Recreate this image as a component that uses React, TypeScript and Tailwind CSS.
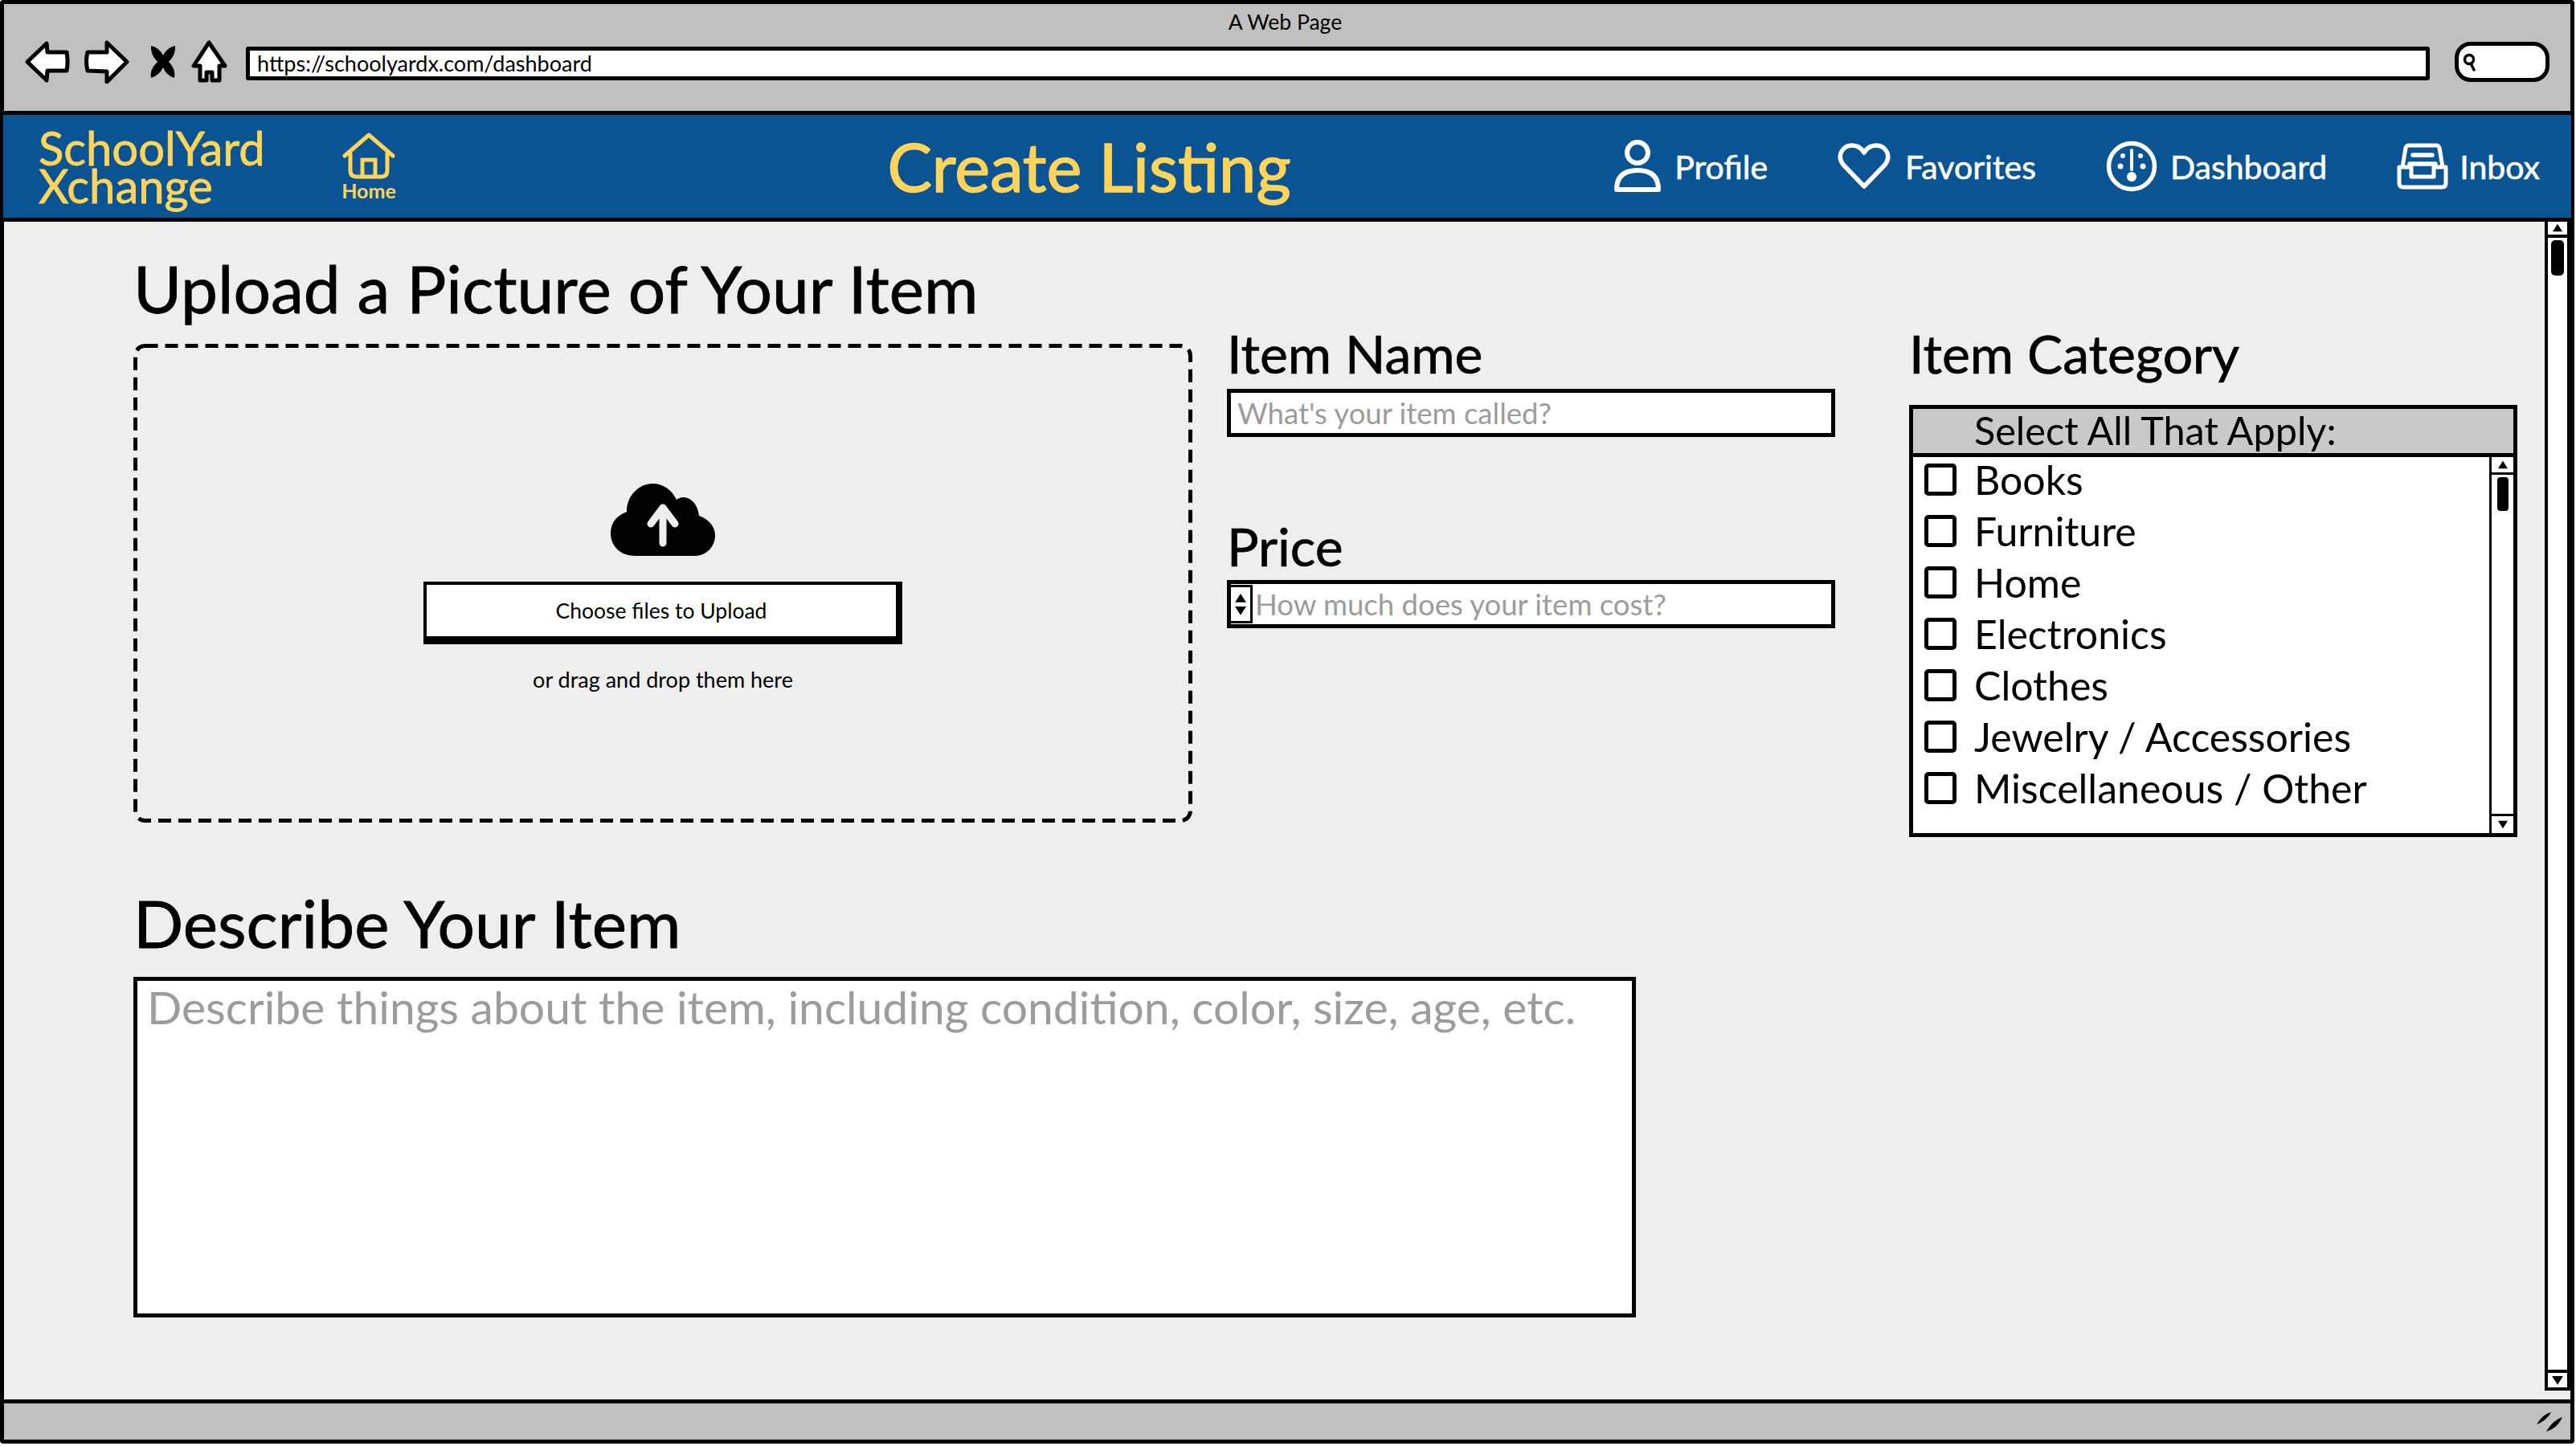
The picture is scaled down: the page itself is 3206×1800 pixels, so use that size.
const categories = [
  "Books",
  "Furniture",
  "Home",
  "Electronics",
  "Clothes",
  "Jewelry / Accessories",
  "Miscellaneous / Other",
];

const BackIcon = () => (
  <svg width="58" height="54" viewBox="0 0 58 54" className="shrink-0">
    <path d="M28 4 L4 27 L28 50 L29 38 L53 38 Q55 27 53 15 L29 15 Z" fill="#fff" stroke="#000" strokeWidth="5" strokeLinejoin="round" />
  </svg>
);

const ForwardIcon = () => (
  <svg width="58" height="54" viewBox="0 0 58 54" className="shrink-0">
    <path d="M29 3 L54 27 L29 52 L29 39 L5 38 Q2 26 5 15 L29 15 Z" fill="#fff" stroke="#000" strokeWidth="5" strokeLinejoin="round" />
  </svg>
);

const StopIcon = () => (
  <svg width="34" height="42" viewBox="0 0 34 42" className="shrink-0">
    <path d="M2 1 Q12 3 17 13 Q22 3 32 1 Q33 12 24 21 Q33 30 31 41 Q21 38 17 28 Q12 38 2 41 Q0 30 10 21 Q1 12 2 1 Z" fill="#000" />
  </svg>
);

const ToolbarHomeIcon = () => (
  <svg width="46" height="54" viewBox="0 0 46 54" className="shrink-0">
    <path d="M23 3 L4 32 L12 32 L12 50 L20 50 L20 40 L27 40 L27 50 L36 50 L36 32 L43 32 Z" fill="#fff" stroke="#000" strokeWidth="5" strokeLinejoin="round" />
  </svg>
);

const SearchPill = () => (
  <div className="w-[118px] h-[50px] rounded-[20px] bg-white border-[5px] border-black flex items-center pl-[5px] shrink-0">
    <svg width="18" height="24" viewBox="0 0 18 24">
      <circle cx="8" cy="9" r="5.5" fill="none" stroke="#000" strokeWidth="3.5" />
      <path d="M10 14 L14 22" stroke="#000" strokeWidth="3.5" strokeLinecap="round" />
    </svg>
  </div>
);

const HomeIcon = () => (
  <svg width="66" height="58" viewBox="0 0 66 58">
    <path d="M3 29 L33 3 L63 29" fill="none" stroke="#ffd45a" strokeWidth="5" strokeLinecap="round" strokeLinejoin="round" />
    <path d="M10 25 V47 Q10 55 18 55 H48 Q56 55 56 47 V25" fill="none" stroke="#ffd45a" strokeWidth="5" />
    <path d="M25 55 V34 H41 V55" fill="none" stroke="#ffd45a" strokeWidth="5" />
  </svg>
);

const ProfileIcon = () => (
  <svg width="58" height="66" viewBox="0 0 58 66" className="shrink-0">
    <circle cx="29" cy="16" r="13" fill="none" stroke="#fff" strokeWidth="6" />
    <path d="M3 62 Q3 38 29 38 Q55 38 55 62 Z" fill="none" stroke="#fff" strokeWidth="6" strokeLinejoin="round" />
  </svg>
);

const HeartIcon = () => (
  <svg width="66" height="58" viewBox="0 0 66 58" className="shrink-0">
    <path d="M33 54 L7 27 C-2 15 7 3 18 3 C25 3 30 7 33 12 C36 7 41 3 48 3 C59 3 68 15 59 27 Z" fill="none" stroke="#fff" strokeWidth="5.5" strokeLinejoin="round" />
  </svg>
);

const GaugeIcon = () => (
  <svg width="64" height="64" viewBox="0 0 64 64" className="shrink-0">
    <circle cx="32" cy="32" r="28.5" fill="none" stroke="#fff" strokeWidth="5.5" />
    <path d="M32 12 V36" stroke="#fff" strokeWidth="4" strokeLinecap="round" />
    <circle cx="32" cy="45" r="6" fill="#fff" />
    <circle cx="18" cy="32" r="3.5" fill="#fff" />
    <circle cx="46" cy="32" r="3.5" fill="#fff" />
    <circle cx="21" cy="19" r="3" fill="#fff" />
    <circle cx="43" cy="19" r="3" fill="#fff" />
  </svg>
);

const InboxIcon = () => (
  <svg width="64" height="58" viewBox="0 0 64 58" className="shrink-0">
    <path d="M7 30 L11 6 Q12 3 15 3 H49 Q52 3 53 6 L57 30" fill="none" stroke="#fff" strokeWidth="5" strokeLinejoin="round" />
    <path d="M3 30 H18 V42 H46 V30 H61 V50 Q61 55 56 55 H8 Q3 55 3 50 Z" fill="none" stroke="#fff" strokeWidth="5" strokeLinejoin="round" />
    <path d="M20 15 H44 M16 26 H48" stroke="#fff" strokeWidth="5.5" strokeLinecap="round" />
  </svg>
);

const CloudUploadIcon = () => (
  <svg width="130" height="90" viewBox="0 0 130 90">
    <path d="M30 90 C10 90 0 76 0 62 C0 48 8 40 20 35 C20 14 36 0 52 0 C66 0 76 8 82 20 C92 12 108 20 110 40 C122 44 130 54 130 64 C130 80 118 90 104 90 Z" fill="#000" />
    <path d="M65 74 V30 M50 50 L65 30 L80 50" fill="none" stroke="#eeeeee" strokeWidth="9" strokeLinecap="round" strokeLinejoin="round" />
  </svg>
);

const Triangle = ({ down = false, size = 16 }: { down?: boolean; size?: number }) => (
  <svg width={size} height={size * 0.8} viewBox="0 0 16 13">
    <path d={down ? "M1 1 H15 L8 12 Z" : "M8 1 L15 12 H1 Z"} fill="#000" />
  </svg>
);

const NavLink = ({ icon, label, gap }: { icon: React.ReactNode; label: string; gap: string }) => (
  <div className={`flex items-center ${gap} text-white text-[41px] leading-none [-webkit-text-stroke:0.6px]`}>
    {icon}
    <span>{label}</span>
  </div>
);

const Scrollbar = () => (
  <div className="w-[32px] h-full shrink-0 bg-white border-x-[4px] border-black flex flex-col">
    <div className="h-[20px] border-b-[4px] border-black flex items-center justify-center shrink-0">
      <Triangle size={14} />
    </div>
    <div className="flex-1 pt-[3px]">
      <div className="mx-auto w-[16px] h-[44px] bg-black rounded-[5px]" />
    </div>
    <div className="h-[26px] border-y-[4px] border-black flex items-center justify-center shrink-0">
      <Triangle down />
    </div>
  </div>
);

const ListScrollbar = () => (
  <div className="w-[30px] shrink-0 border-l-[3px] border-black flex flex-col">
    <div className="h-[22px] border-b-[3px] border-black flex items-center justify-center">
      <Triangle size={14} />
    </div>
    <div className="flex-1 pt-[3px]">
      <div className="mx-auto w-[14px] h-[42px] bg-black rounded-[4px]" />
    </div>
    <div className="h-[24px] border-t-[3px] border-black flex items-center justify-center">
      <Triangle down size={14} />
    </div>
  </div>
);

export default function App() {
  return (
    <div className="w-[3206px] h-[1800px] bg-white overflow-hidden font-['Lato','Open_Sans',sans-serif] text-black">
      <div className="w-[3204px] h-[1797px] border-[5px] border-black rounded-[4px] bg-[#eeeeee] flex flex-col">
        {/* browser chrome */}
        <div className="h-[133px] bg-[#c0c0c0] shrink-0 flex flex-col">
          <div className="h-[45px] flex items-center justify-center text-[26.5px] leading-none pr-[5px]">
            A Web Page
          </div>
          <div className="flex items-center pl-[25px] pr-[26px]">
            <BackIcon />
            <div className="ml-[16px]">
              <ForwardIcon />
            </div>
            <div className="ml-[24px]">
              <StopIcon />
            </div>
            <div className="ml-[17px]">
              <ToolbarHomeIcon />
            </div>
            <div className="ml-[23px] mt-[3px] flex-1 h-[42px] bg-white border-[5px] border-black rounded-[3px] flex items-center pl-[9px] text-[27px] leading-none">
              https://schoolyardx.com/dashboard
            </div>
            <div className="ml-[31px]">
              <SearchPill />
            </div>
          </div>
        </div>

        {/* site header */}
        <div className="h-[138px] -mx-[1px] bg-[#0a5494] border-y-[5px] border-black shrink-0 flex items-center pl-[44px] pr-[39px] text-[#ffd45a]">
          <div className="w-[376px] shrink-0 text-[58px] leading-[47px] [-webkit-text-stroke:0.8px]">
            <div>SchoolYard</div>
            <div>Xchange</div>
          </div>
          <div className="flex flex-col items-center gap-[2px] w-[70px] shrink-0">
            <HomeIcon />
            <span className="text-[25px] font-bold leading-none">Home</span>
          </div>
          <div className="flex-1 text-center text-[83px] leading-none pl-[208px] [-webkit-text-stroke:1.5px]">Create Listing</div>
          <div className="flex items-center gap-[87px]">
            <NavLink icon={<ProfileIcon />} label="Profile" gap="gap-[17px]" />
            <NavLink icon={<HeartIcon />} label="Favorites" gap="gap-[18px]" />
            <NavLink icon={<GaugeIcon />} label="Dashboard" gap="gap-[16px]" />
            <NavLink icon={<InboxIcon />} label="Inbox" gap="gap-[14px]" />
          </div>
        </div>

        {/* page body */}
        <div className="flex-1 min-h-0 flex">
          <div className="flex-1 pl-[161px] pt-[36px]">
            <div className="flex">
              <div className="w-[1318px] shrink-0">
                <h1 className="text-[82px] leading-[92px] font-normal [-webkit-text-stroke:0.8px]">Upload a Picture of Your Item</h1>
                <div className="relative mt-[24px] h-[596px] flex flex-col items-center pt-[174px]">
                  <svg className="absolute inset-0 w-full h-full" fill="none">
                    <rect x="2.5" y="2.5" width="1313" height="591" rx="12" stroke="#000" strokeWidth="5" strokeDasharray="16 9" />
                  </svg>
                  <CloudUploadIcon />
                  <div className="mt-[32px] w-[596px] h-[78px] bg-white border-[4px] border-black border-b-[10px] border-r-[8px] flex items-center justify-center text-[26.5px] leading-none">
                    Choose files to Upload
                  </div>
                  <p className="mt-[30px] text-[27px] leading-none">or drag and drop them here</p>
                </div>
              </div>

              <div className="ml-[43px] w-[757px] shrink-0 pt-[90px]">
                <h2 className="text-[66px] leading-[76px] font-normal [-webkit-text-stroke:0.7px]">Item Name</h2>
                <div className="mt-[6px] h-[60px] bg-white border-[5px] border-black flex items-center pl-[8px] text-[36.5px] leading-none text-[#9c9c9c]">
                  What's your item called?
                </div>
                <h2 className="mt-[98px] text-[66px] leading-[76px] font-normal [-webkit-text-stroke:0.7px]">Price</h2>
                <div className="mt-[4px] h-[60px] bg-white border-[5px] border-black flex items-center text-[36.5px] leading-none text-[#9c9c9c]">
                  <div className="w-[30px] h-[48px] border-[3px] border-black -ml-[3px] flex flex-col items-center justify-center gap-[3px] mr-[3px]">
                    <Triangle size={16} />
                    <Triangle down size={16} />
                  </div>
                  How much does your item cost?
                </div>
              </div>

              <div className="ml-[92px] w-[757px] shrink-0 pt-[90px]">
                <h2 className="text-[66px] leading-[76px] font-normal [-webkit-text-stroke:0.7px]">Item Category</h2>
                <div className="mt-[26px] h-[538px] bg-white border-[5px] border-black flex flex-col">
                  <div className="h-[60px] bg-[#c9c9c9] border-b-[5px] border-black pl-[76px] pb-[2px] flex items-center text-[48.6px] leading-none shrink-0">
                    Select All That Apply:
                  </div>
                  <div className="flex-1 min-h-0 flex">
                    <ul className="flex-1 pl-[14px] -mt-[4px]">
                      {categories.map((name) => (
                        <li key={name} className="h-[64px] flex items-center gap-[22px] text-[50px] leading-none">
                          <span className="w-[40px] h-[40px] border-[5px] border-black rounded-[5px] shrink-0" />
                          {name}
                        </li>
                      ))}
                    </ul>
                    <ListScrollbar />
                  </div>
                </div>
              </div>
            </div>

            <h1 className="mt-[60px] text-[82px] leading-[92px] font-normal [-webkit-text-stroke:0.8px]">Describe Your Item</h1>
            <div className="mt-[22px] w-[1870px] h-[424px] bg-white border-[5px] border-black pl-[12px] pt-[2px] text-[57px] leading-[60px] text-[#9c9c9c]">
              Describe things about the item, including condition, color, size, age, etc.
            </div>
          </div>
          <div className="h-[1455px]">
            <Scrollbar />
          </div>
        </div>

        {/* status bar */}
        <div className="h-[50px] bg-[#c0c0c0] border-t-[5px] border-black shrink-0 flex items-center justify-end pr-[8px]">
          <svg width="36" height="28" viewBox="0 0 36 28">
            <path d="M2 17 Q10 4 20 2 Q14 13 2 17 Z M14 26 Q22 12 34 8 Q28 22 14 26 Z" fill="#000" />
          </svg>
        </div>
      </div>
    </div>
  );
}
